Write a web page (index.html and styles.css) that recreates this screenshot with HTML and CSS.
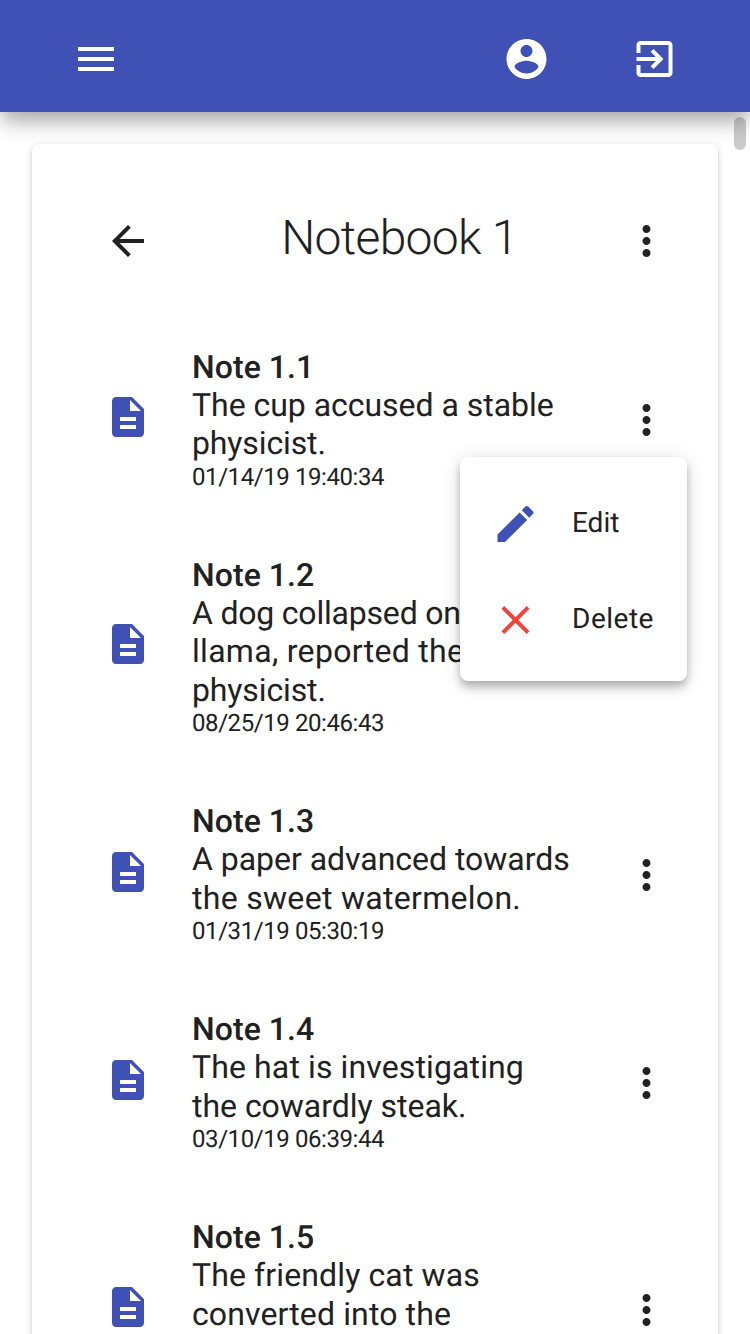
FILE: index.html
```html
<!DOCTYPE html>
<html lang="en">
<head>
<meta charset="utf-8">
<title>Notebook 1</title>
<link rel="stylesheet" href="styles.css">
</head>
<body>
<svg class="sprite" aria-hidden="true">
  <symbol id="menu" viewBox="0 0 24 24"><path d="M3 18h18v-2H3v2zm0-5h18v-2H3v2zm0-7v2h18V6H3z"/></symbol>
  <symbol id="account" viewBox="0 0 24 24"><path d="M12 2C6.48 2 2 6.48 2 12s4.48 10 10 10 10-4.480 10-10S17.520 2 12 2zm0 3c1.660 0 3 1.340 3 3s-1.340 3-3 3-3-1.340-3-3 1.340-3 3-3zm0 14.200c-2.500 0-4.710-1.280-6-3.220.030-1.990 4-3.080 6-3.080 1.990 0 5.970 1.090 6 3.080-1.290 1.940-3.500 3.220-6 3.220z"/></symbol>
  <symbol id="exit" viewBox="0 0 24 24"><path d="M10.090 15.590L11.500 17l5-5-5-5-1.410 1.410L12.670 11H3v2h9.670l-2.580 2.590zM19 3H5c-1.110 0-2 .9-2 2v4h2V5h14v14H5v-4H3v4c0 1.100.89 2 2 2h14c1.100 0 2-.9 2-2V5c0-1.100-.9-2-2-2z"/></symbol>
  <symbol id="back" viewBox="0 0 24 24"><path d="M20 11H7.830l5.590-5.590L12 4l-8 8 8 8 1.410-1.410L7.830 13H20v-2z"/></symbol>
  <symbol id="more" viewBox="0 0 24 24"><path d="M12 8c1.100 0 2-.9 2-2s-.9-2-2-2-2 .9-2 2 .9 2 2 2zm0 2c-1.100 0-2 .9-2 2s.9 2 2 2 2-.9 2-2-.9-2-2-2zm0 6c-1.100 0-2 .9-2 2s.9 2 2 2 2-.9 2-2-.9-2-2-2z"/></symbol>
  <symbol id="note" viewBox="0 0 24 24"><path d="M14 2H6c-1.100 0-1.990.9-1.990 2L4 20c0 1.100.89 2 1.990 2H18c1.100 0 2-.9 2-2V8l-6-6zm2 16H8v-2h8v2zm0-4H8v-2h8v2zm-3-5V3.500L18.500 9H13z"/></symbol>
  <symbol id="edit" viewBox="0 0 24 24"><path d="M3 17.250V21h3.750L17.810 9.940l-3.750-3.750L3 17.250zM20.710 7.040c.39-.39.39-1.020 0-1.410l-2.340-2.340c-.39-.39-1.020-.39-1.410 0l-1.830 1.830 3.750 3.750 1.830-1.830z"/></symbol>
  <symbol id="close" viewBox="0 0 24 24"><path d="M19 6.410L17.590 5 12 10.590 6.410 5 5 6.410 10.590 12 5 17.590 6.410 19 12 13.410 17.590 19 19 17.590 13.410 12z"/></symbol>
</svg>
<header class="app-bar">
  <svg class="icon"><use href="#menu"/></svg>
  <div class="app-actions">
    <svg class="icon nudge"><use href="#account"/></svg>
    <svg class="icon nudge"><use href="#exit"/></svg>
  </div>
</header>
<main class="page">
  <section class="card">
    <div class="card-head">
      <svg class="icon"><use href="#back"/></svg>
      <h1 class="title">Notebook 1</h1>
      <svg class="icon nudge"><use href="#more"/></svg>
    </div>
    <ul class="notes">
      <li class="note">
        <svg class="icon note-icon"><use href="#note"/></svg>
        <div class="note-text"><h2 class="note-title">Note 1.1</h2><p class="note-body"><span class="tight">The cup accused a stable</span><br><span class="tighter">physicist.</span></p><p class="note-date">01/14/19 19:40:34</p></div>
        <svg class="icon nudge"><use href="#more"/></svg>
      </li>
      <li class="note">
        <svg class="icon note-icon"><use href="#note"/></svg>
        <div class="note-text"><h2 class="note-title">Note 1.2</h2><p class="note-body"><span class="tightest">A dog collapsed on the</span><br>llama, reported the<br><span class="tighter">physicist.</span></p><p class="note-date">08/25/19 20:46:43</p></div>
        <svg class="icon nudge"><use href="#more"/></svg>
      </li>
      <li class="note">
        <svg class="icon note-icon"><use href="#note"/></svg>
        <div class="note-text"><h2 class="note-title">Note 1.3</h2><p class="note-body"><span class="tight">A paper advanced towards</span><br>the sweet watermelon.</p><p class="note-date">01/31/19 05:30:19</p></div>
        <svg class="icon nudge"><use href="#more"/></svg>
      </li>
      <li class="note">
        <svg class="icon note-icon"><use href="#note"/></svg>
        <div class="note-text"><h2 class="note-title">Note 1.4</h2><p class="note-body"><span class="snug">The hat is investigating</span><br><span class="tight">the cowardly steak.</span></p><p class="note-date">03/10/19 06:39:44</p></div>
        <svg class="icon nudge"><use href="#more"/></svg>
      </li>
      <li class="note">
        <svg class="icon note-icon"><use href="#note"/></svg>
        <div class="note-text tall"><h2 class="note-title">Note 1.5</h2><p class="note-body"><span class="snug">The friendly cat was</span><br><span class="snug">converted into the</span></p></div>
        <svg class="icon nudge"><use href="#more"/></svg>
      </li>
    </ul>
  </section>
</main>
<div class="scroll-thumb"></div>
<div class="menu">
  <div class="menu-item"><svg class="icon menu-icon edit"><use href="#edit"/></svg><span class="tight">Edit</span></div>
  <div class="menu-item"><svg class="icon menu-icon delete"><use href="#close"/></svg><span>Delete</span></div>
</div>
</body>
</html>
```

FILE: styles.css
```css
* { box-sizing: border-box; }

body {
  margin: 0;
  height: 1334px;
  display: flex;
  flex-direction: column;
  overflow: hidden;
  position: relative;
  background: #fff;
  color: #212121;
  font-family: Roboto, sans-serif;
  text-rendering: geometricPrecision;
}

h1, h2, p, ul { margin: 0; padding: 0; }

.sprite { position: absolute; width: 0; height: 0; }

.icon {
  display: block;
  flex: none;
  width: 48px;
  height: 48px;
  fill: currentColor;
}

.nudge { transform: translateX(.5px); }

.app-bar {
  position: relative;
  z-index: 2;
  flex: none;
  height: 112px;
  padding: 6px 72px 0 72px;
  display: flex;
  align-items: center;
  justify-content: space-between;
  background: #3f51b5;
  color: #fff;
  box-shadow: 0 10px 16px -4px rgba(0, 0, 0, .2), 0 14px 20px 0 rgba(0, 0, 0, .1), 0 6px 28px 0 rgba(0, 0, 0, .1);
}

.app-actions { display: flex; gap: 80px; }

.page {
  flex: 1;
  min-height: 0;
  padding: 32px 32px 0;
  overflow: hidden;
}

.card {
  position: relative;
  padding: 48px 48px 0 72px;
  border-radius: 8px;
  background: #fff;
  box-shadow: 0 2px 6px rgba(0, 0, 0, .2), 0 2px 2px rgba(0, 0, 0, .1);
}

.card-head {
  height: 124px;
  padding: 25px 0 0;
  display: grid;
  grid-template-columns: 48px 1fr 48px;
  align-items: start;
}

.title {
  margin-top: -3px;
  padding-left: 25px;
  text-align: center;
  font-size: 48px;
  font-weight: 300;
  line-height: 48px;
  letter-spacing: -.7px;
}

.notes { list-style: none; }

.note {
  padding: 32px 0;
  display: flex;
  align-items: center;
}

.note .icon { margin-top: .4px; }

.note .note-icon {
  margin: 0 40px 5.600px 0;
  color: #3f51b5;
}

.note-text { flex: 1; margin: -.3px 0 .3px; white-space: nowrap; }
.tall { height: 182.400px; }

.note-title, .note-body {
  font-size: 32px;
  line-height: 38.400px;
  letter-spacing: .3px;
}

.note-title { font-weight: 500; letter-spacing: .05px; }

.note-body { margin: -.4px 0 .4px; }
.snug { letter-spacing: .12px; }
.tight { letter-spacing: -.03px; }
.tighter { letter-spacing: -.13px; }
.tightest { letter-spacing: -.2px; }

.note-date {
  font-size: 24px;
  line-height: 28.800px;
  letter-spacing: -.42px;
}

.scroll-thumb {
  position: absolute;
  z-index: 1;
  top: 117px;
  right: 4px;
  width: 12px;
  height: 33px;
  border-radius: 6px;
  background: #cbcbcb;
}

.menu {
  position: absolute;
  z-index: 3;
  left: 460px;
  top: 457px;
  width: 227px;
  height: 224px;
  padding: 16px 0;
  border-radius: 8px;
  background: #fff;
  font-size: 28px;
  letter-spacing: .5px;
  box-shadow: 0 4px 8px -2px rgba(0, 0, 0, .2), 0 8px 10px 0 rgba(0, 0, 0, .14), 0 2px 20px 0 rgba(0, 0, 0, .12);
}

.menu-item {
  height: 96px;
  padding-left: 31px;
  display: flex;
  align-items: center;
  line-height: 42px;
}

.menu-item span { padding-top: 4px; }

.menu-icon { margin: 6px 33px 0 0; transform: translateX(.5px); }
.edit { color: #3f51b5; }
.delete { color: #f44336; }
```
